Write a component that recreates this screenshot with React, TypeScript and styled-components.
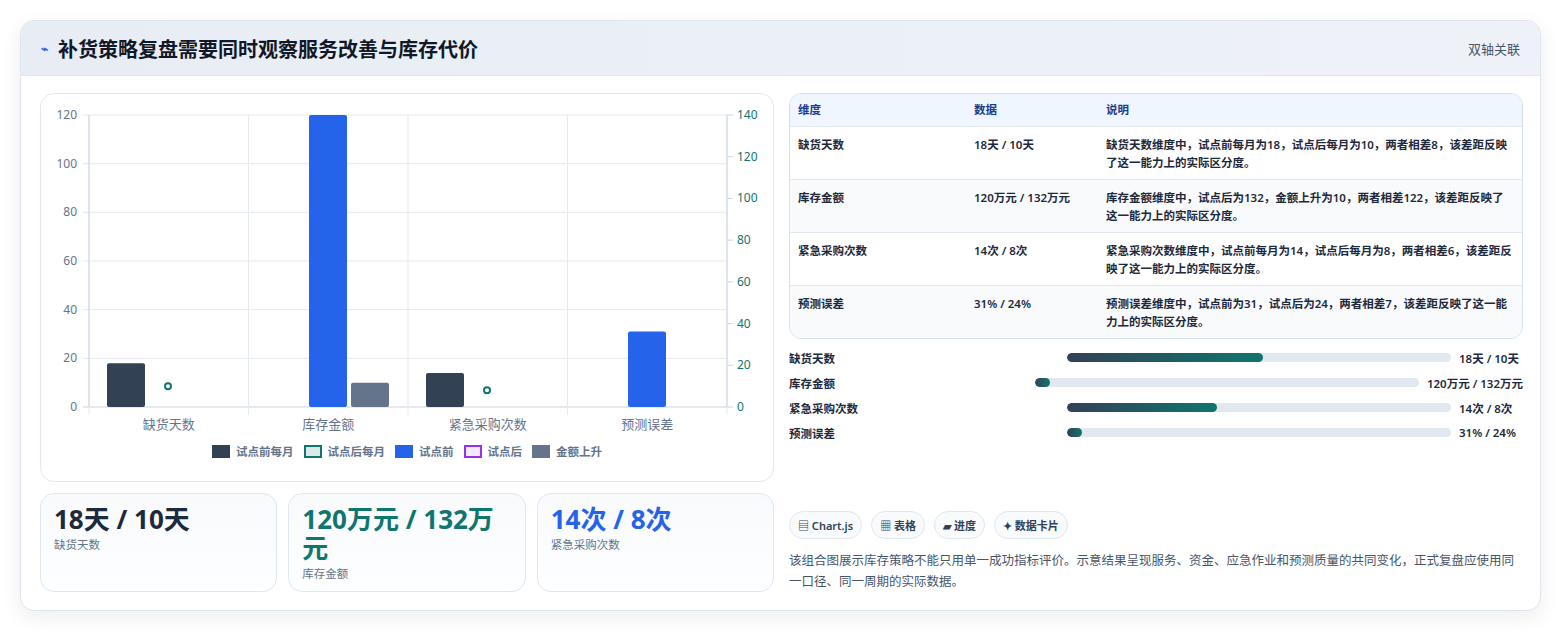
import React from 'react';
import styled, { createGlobalStyle } from 'styled-components';

const Global = createGlobalStyle`
  body { margin: 0; background: #fff; font-family: "Noto Sans", "Noto Sans CJK SC", sans-serif; }
`;

const Page = styled.div`
  padding: 20px 20px 20px 20px;
`;

const Card = styled.div`
  border: 1px solid #dfe5ee;
  border-radius: 14px;
  overflow: hidden;
  box-shadow: 0 6px 20px rgba(15, 23, 42, 0.08);
  background: #fff;
`;

const Header = styled.div`
  height: 54px;
  display: flex;
  align-items: center;
  justify-content: space-between;
  padding: 0 20px;
  background: linear-gradient(90deg, #e8edf5, #eef2f8);
  border-bottom: 1px solid #e3e8f0;
`;

const Title = styled.h1`
  margin: 0;
  font-size: 20px;
  font-weight: 700;
  color: #111827;
  display: flex;
  align-items: center;
  gap: 10px;
`;

const Bolt = styled.span`
  color: #2563eb;
  font-size: 12px;
`;

const HeadTag = styled.span`
  font-size: 13px;
  color: #475569;
`;

const Body = styled.div`
  display: grid;
  grid-template-columns: 734px 734px;
  gap: 15px;
  padding: 17px 19px 18px 19px;
`;

const Col = styled.div`
  display: flex;
  flex-direction: column;
  gap: 11px;
`;

const ChartPanel = styled.div`
  height: 387px;
  border: 1px solid #e2e8f0;
  border-radius: 14px;
`;

const Legend = styled.div`
  display: flex;
  justify-content: center;
  gap: 10px;
  font-size: 11.5px;
  color: #64748b;
  font-weight: 600;
  margin-top: -1px;
`;

const LegendItem = styled.span`
  display: flex;
  align-items: center;
  gap: 6px;
`;

const Swatch = styled.i<{ $bg: string; $bd?: string }>`
  width: 18px;
  height: 13px;
  box-sizing: border-box;
  background: ${p => p.$bg};
  border: ${p => (p.$bd ? `2px solid ${p.$bd}` : 'none')};
`;

const Stats = styled.div`
  display: grid;
  grid-template-columns: repeat(3, 1fr);
  gap: 11px;
`;

const Stat = styled.div`
  height: 99px;
  box-sizing: border-box;
  border: 1px solid #dfe7f1;
  border-radius: 14px;
  padding: 11px 13px;
  background: linear-gradient(180deg, #f8fafc, #fdfeff);
`;

const StatValue = styled.div<{ $c: string }>`
  font-size: 26px;
  line-height: 29px;
  font-weight: 700;
  color: ${p => p.$c};
`;

const StatLabel = styled.div`
  font-size: 11.5px;
  color: #64748b;
  margin-top: 2px;
`;

const Table = styled.div`
  border: 1px solid #d6e0ec;
  border-radius: 12px;
  overflow: hidden;
  font-size: 11.5px;
  color: #1e293b;
`;

const Row = styled.div<{ $head?: boolean; $alt?: boolean }>`
  display: grid;
  grid-template-columns: 176px 132px 1fr;
  padding: 0 8px;
  min-height: ${p => (p.$head ? 32 : 52)}px;
  align-items: ${p => (p.$head ? 'center' : 'start')};
  background: ${p => (p.$head ? '#eff6ff' : p.$alt ? '#f8fafc' : '#fff')};
  border-top: ${p => (p.$head ? 'none' : '1px solid #e2e8f0')};
  color: ${p => (p.$head ? '#1e3a8a' : '#1e293b')};
  font-weight: 600;
  > span { padding-top: ${p => (p.$head ? 0 : 9)}px; line-height: 18px; }
`;

const Bars = styled.div`
  display: flex;
  flex-direction: column;
  gap: 6px;
  margin-top: 9px;
`;

const BarRow = styled.div`
  display: flex;
  align-items: center;
  gap: 8px;
  font-size: 11.5px;
  font-weight: 600;
  color: #1e293b;
  height: 19px;
`;

const BarLabel = styled.span`
  flex: 1;
`;

const Track = styled.div`
  width: 384px;
  height: 9px;
  border-radius: 5px;
  background: #e2e8f0;
  overflow: hidden;
`;

const Fill = styled.div`
  height: 100%;
  border-radius: 5px;
  background: linear-gradient(90deg, #334155, #0f766e);
`;

const Value = styled.span`
  min-width: 64px;
`;

const Chips = styled.div`
  display: flex;
  gap: 9px;
  margin-top: auto;
`;

const Chip = styled.span`
  font-size: 11px;
  font-weight: 600;
  color: #334155;
  border: 1px solid #e2e8f0;
  background: #f8fafc;
  border-radius: 14px;
  padding: 5px 8px;
`;

const Note = styled.p`
  margin: 11px 0 0;
  font-size: 12.5px;
  line-height: 21px;
  color: #475569;
`;

const L = 48, R = 686, T = 21, B = 313;
const cw = (R - L) / 4;
const yl = (v: number) => B - (v * (B - T)) / 120;
const yr = (v: number) => B - (v * (B - T)) / 140;

const Chart = () => (
  <svg width="733" height="350" style={{ display: 'block' }}>
    {[0, 20, 40, 60, 80, 100, 120].map(v => (
      <g key={v}>
        <line x1={L - 6} x2={R} y1={yl(v)} y2={yl(v)} stroke={v ? '#e5e9f0' : '#cbd5e1'} />
        <text x={L - 12} y={yl(v) + 4} fontSize="12" fill="#64748b" textAnchor="end">{v}</text>
      </g>
    ))}
    {[0, 20, 40, 60, 80, 100, 120, 140].map(v => (
      <g key={v}>
        <line x1={R} x2={R + 6} y1={yr(v)} y2={yr(v)} stroke="#cbd5e1" />
        <text x={R + 10} y={yr(v) + 4} fontSize="12" fill="#0f766e">{v}</text>
      </g>
    ))}
    {[0, 1, 2, 3, 4].map(i => (
      <line key={i} x1={L + i * cw} x2={L + i * cw} y1={T} y2={B + 8} stroke="#e5e9f0" />
    ))}
    <line x1={L} x2={L} y1={T} y2={B} stroke="#cbd5e1" />
    <line x1={R} x2={R} y1={T} y2={B} stroke="#cbd5e1" />
    <rect x={66} y={yl(18)} width={38} height={B - yl(18)} rx="2" fill="#334155" />
    <rect x={268} y={yl(120)} width={38} height={B - yl(120)} rx="2" fill="#2563eb" />
    <rect x={310} y={yl(10)} width={38} height={B - yl(10)} rx="2" fill="#64748b" />
    <rect x={385} y={yl(14)} width={38} height={B - yl(14)} rx="2" fill="#334155" />
    <rect x={587} y={yl(31)} width={38} height={B - yl(31)} rx="2" fill="#2563eb" />
    <circle cx={127} cy={yr(10)} r="3" fill="#fff" stroke="#0f766e" strokeWidth="2" />
    <circle cx={446} cy={yr(8)} r="3" fill="#fff" stroke="#0f766e" strokeWidth="2" />
    {['缺货天数', '库存金额', '紧急采购次数', '预测误差'].map((c, i) => (
      <text key={c} x={L + cw * (i + 0.5)} y={B + 22} fontSize="13" fill="#64748b" textAnchor="middle">{c}</text>
    ))}
  </svg>
);

const rows = [
  ['缺货天数', '18天 / 10天', '缺货天数维度中，试点前每月为18，试点后每月为10，两者相差8，该差距反映了这一能力上的实际区分度。'],
  ['库存金额', '120万元 / 132万元', '库存金额维度中，试点后为132，金额上升为10，两者相差122，该差距反映了这一能力上的实际区分度。'],
  ['紧急采购次数', '14次 / 8次', '紧急采购次数维度中，试点前每月为14，试点后每月为8，两者相差6，该差距反映了这一能力上的实际区分度。'],
  ['预测误差', '31% / 24%', '预测误差维度中，试点前为31，试点后为24，两者相差7，该差距反映了这一能力上的实际区分度。'],
];

const progress: [string, number, string][] = [
  ['缺货天数', 51, '18天 / 10天'],
  ['库存金额', 4, '120万元 / 132万元'],
  ['紧急采购次数', 39, '14次 / 8次'],
  ['预测误差', 4, '31% / 24%'],
];

export default function App() {
  return (
    <Page>
      <Global />
      <Card>
        <Header>
          <Title><Bolt>⌁</Bolt>补货策略复盘需要同时观察服务改善与库存代价</Title>
          <HeadTag>双轴关联</HeadTag>
        </Header>
        <Body>
          <Col>
            <ChartPanel>
              <Chart />
              <Legend>
                <LegendItem><Swatch $bg="#334155" />试点前每月</LegendItem>
                <LegendItem><Swatch $bg="#dbeae8" $bd="#0f766e" />试点后每月</LegendItem>
                <LegendItem><Swatch $bg="#2563eb" />试点前</LegendItem>
                <LegendItem><Swatch $bg="#f3e8ff" $bd="#9333ea" />试点后</LegendItem>
                <LegendItem><Swatch $bg="#64748b" />金额上升</LegendItem>
              </Legend>
            </ChartPanel>
            <Stats>
              <Stat><StatValue $c="#1e293b">18天 / 10天</StatValue><StatLabel>缺货天数</StatLabel></Stat>
              <Stat><StatValue $c="#0f766e">120万元 / 132万元</StatValue><StatLabel>库存金额</StatLabel></Stat>
              <Stat><StatValue $c="#2563eb">14次 / 8次</StatValue><StatLabel>紧急采购次数</StatLabel></Stat>
            </Stats>
          </Col>
          <Col style={{ gap: 0 }}>
            <Table>
              <Row $head><span>维度</span><span>数据</span><span>说明</span></Row>
              {rows.map((r, i) => (
                <Row key={r[0]} $alt={i % 2 === 1}>
                  <span>{r[0]}</span><span>{r[1]}</span><span>{r[2]}</span>
                </Row>
              ))}
            </Table>
            <Bars>
              {progress.map(([l, w, v]) => (
                <BarRow key={l}>
                  <BarLabel>{l}</BarLabel>
                  <Track><Fill style={{ width: `${w}%` }} /></Track>
                  <Value>{v}</Value>
                </BarRow>
              ))}
            </Bars>
            <Chips>
              <Chip>▤ Chart.js</Chip>
              <Chip>▦ 表格</Chip>
              <Chip>▰ 进度</Chip>
              <Chip>✦ 数据卡片</Chip>
            </Chips>
            <Note>该组合图展示库存策略不能只用单一成功指标评价。示意结果呈现服务、资金、应急作业和预测质量的共同变化，正式复盘应使用同一口径、同一周期的实际数据。</Note>
          </Col>
        </Body>
      </Card>
    </Page>
  );
}
